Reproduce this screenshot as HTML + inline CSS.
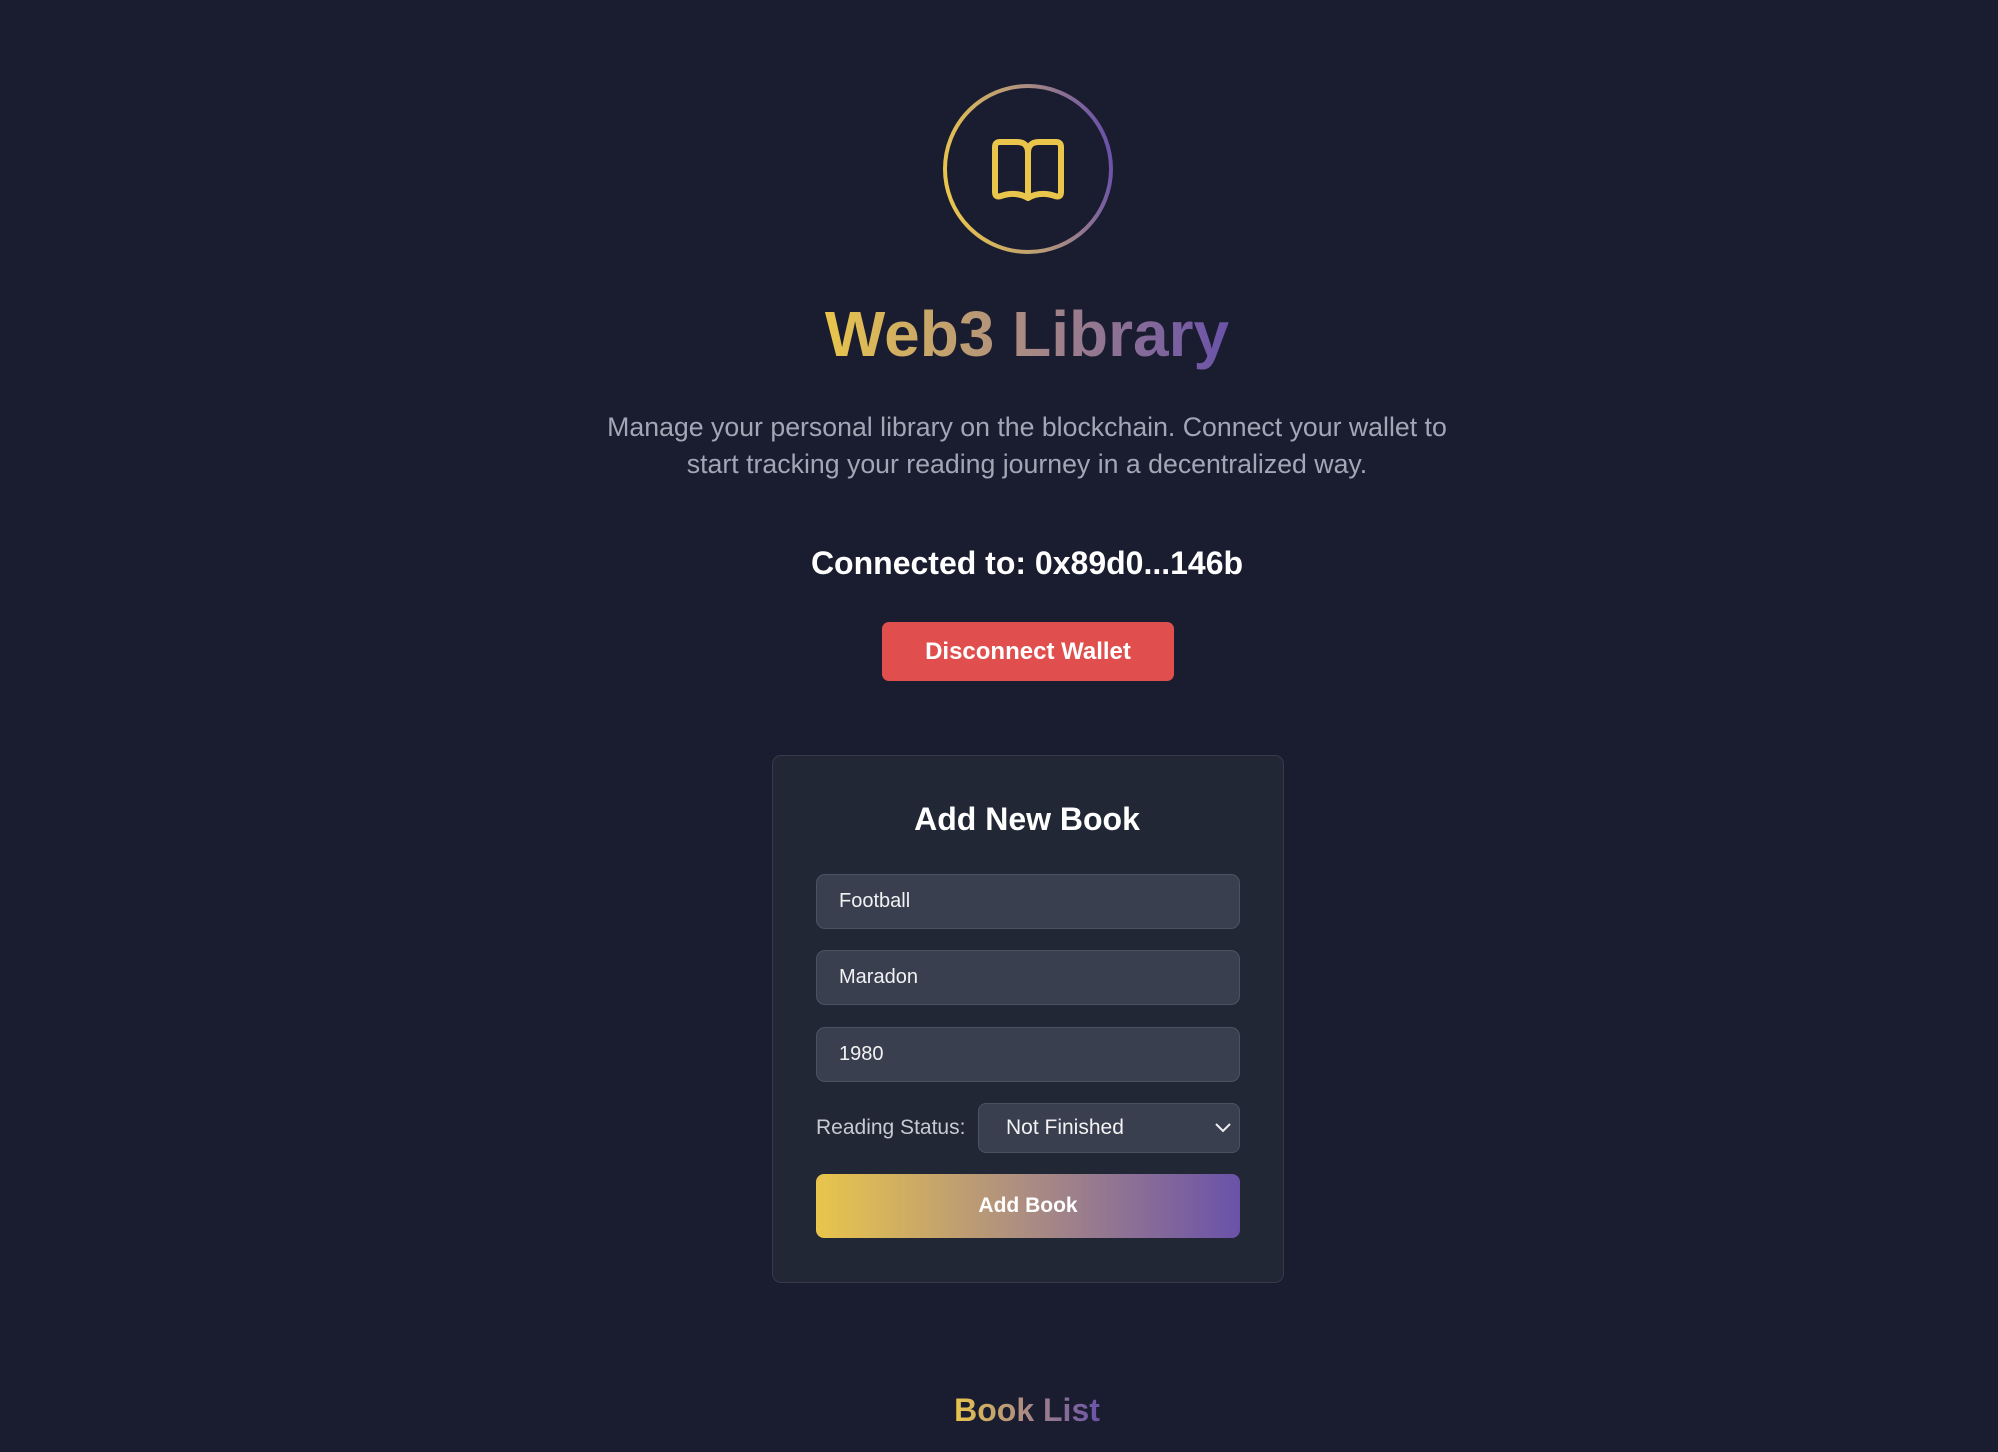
<!DOCTYPE html>
<html><head><meta charset="utf-8"><style>
*{margin:0;padding:0;box-sizing:border-box}
html,body{width:1998px;height:1452px;overflow:hidden;background:#1a1c2f;font-family:"Liberation Sans",Arial,sans-serif}
.abs{position:absolute}
.grad{background:linear-gradient(90deg,#e9c54c,#a98a84 50%,#6a52a9);-webkit-background-clip:text;background-clip:text;color:transparent}
.center{left:0;width:2054px;text-align:center}
.inp{position:absolute;left:816px;width:424px;height:55px;background:#3a3f50;border:1px solid #4d5263;border-radius:9px;color:#f2f2f2;font-size:20px;padding-left:22px;line-height:53px}
</style></head><body>
<svg class="abs" style="left:940px;top:82px" width="176" height="176" viewBox="0 0 176 176">
<defs><linearGradient id="g" x1="0" y1="0.6" x2="1" y2="0.4"><stop offset="0" stop-color="#e9c54c"/><stop offset="0.5" stop-color="#b89a78"/><stop offset="1" stop-color="#6a52a9"/></linearGradient></defs>
<circle cx="88" cy="87" r="83" fill="none" stroke="url(#g)" stroke-width="4"/>
<path d="M88 71 Q88 60 77 60 H60 Q55 60 55 65 V110 Q55 116 61 114 Q76 109 88 116 Q100 109 115 114 Q121 116 121 110 V65 Q121 60 116 60 H99 Q88 60 88 71 Z M88 71 V114" fill="none" stroke="#e9c54c" stroke-width="6" stroke-linejoin="round" stroke-linecap="round"/>
</svg>
<div class="abs center" style="top:294px;font-size:64px;font-weight:bold;line-height:80px"><span class="grad">Web3 Library</span></div>
<div class="abs center" style="top:409px;font-size:26.7px;line-height:37px;color:#a3a6b4">Manage your personal library on the blockchain. Connect your wallet to<br>start tracking your reading journey in a decentralized way.</div>
<div class="abs center" style="top:543px;font-size:32px;font-weight:bold;color:#fff;line-height:40px">Connected to: 0x89d0...146b</div>
<div class="abs" style="left:882px;top:622px;width:292px;height:59px;background:#e04f4d;border-radius:7px;color:#fff;font-weight:bold;font-size:24px;text-align:center;line-height:59px">Disconnect Wallet</div>
<div class="abs" style="left:772px;top:755px;width:512px;height:528px;background:#222736;border:1px solid #353a4a;border-radius:9px"></div>
<div class="abs center" style="top:799px;font-size:32px;font-weight:bold;color:#fff;line-height:40px">Add New Book</div>
<div class="inp" style="top:874px">Football</div>
<div class="inp" style="top:950px">Maradon</div>
<div class="inp" style="top:1027px">1980</div>
<div class="abs" style="left:816px;top:1103px;line-height:50px;font-size:21px;color:#c8cad2">Reading Status:</div>
<div class="abs" style="left:978px;top:1103px;width:262px;height:50px;background:#3a3f50;border:1px solid #4d5263;border-radius:8px;color:#f2f2f2;font-size:21px;line-height:48px;padding-left:27px">Not Finished
<svg class="abs" style="right:7px;top:18px" width="18" height="12" viewBox="0 0 18 12"><path d="M2 2 L9 9 L16 2" fill="none" stroke="#eee" stroke-width="2"/></svg></div>
<div class="abs" style="left:816px;top:1174px;width:424px;height:64px;border-radius:8px;background:linear-gradient(90deg,#e9c54c,#a98a84 52%,#6a52a9);color:#fff;font-weight:bold;font-size:21px;text-align:center;line-height:64px">Add Book</div>
<div class="abs center" style="top:1390px;font-size:32px;font-weight:bold;line-height:40px"><span class="grad">Book List</span></div>
</body></html>
